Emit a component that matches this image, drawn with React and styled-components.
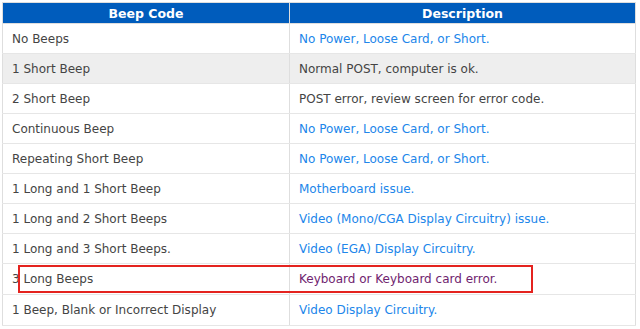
import React from "react";
import styled, { createGlobalStyle } from "styled-components";

const Global = createGlobalStyle`
  html, body { margin: 0; padding: 0; background: #fff; }
  body { font-family: "DejaVu Sans", Verdana, sans-serif; }
`;

const Page = styled.div`
  padding: 2px 0 0 2px;
  width: 634px;
`;

const Wrap = styled.div`
  position: relative;
`;

const Table = styled.table`
  border-collapse: collapse;
  width: 634px;
  table-layout: fixed;
  border: 1px solid #dedede;
`;

const Head = styled.th`
  background: #005cbc;
  color: #fff;
  font-weight: bold;
  font-size: 12.5px;
  height: 20px;
  padding: 0;
  text-align: center;
  border-right: 1px solid #dedede;
  border-bottom: 1px solid #dedede;
`;

const Row = styled.tr`
  background: ${(p) => (p.$shade ? "#eeeeee" : "#ffffff")};
`;

const Cell = styled.td`
  height: ${(p) => (p.$tall ? 30 : 29)}px;
  padding: 0 0 0 9px;
  font-size: 12px;
  color: ${(p) => p.$color || "#444"};
  border-right: 1px solid #dedede;
  border-bottom: 1px solid #e6e6e6;
  white-space: nowrap;
`;

const Highlight = styled.div`
  position: absolute;
  left: 16px;
  top: 263px;
  width: 511px;
  height: 24px;
  border: 2px solid #e4231f;
  pointer-events: none;
`;

const BLUE = "#2186ea";
const PURPLE = "#70246f";
const DARK = "#444";

const rows = [
  { code: "No Beeps", desc: "No Power, Loose Card, or Short.", color: BLUE },
  { code: "1 Short Beep", desc: "Normal POST, computer is ok.", color: DARK, shade: true },
  { code: "2 Short Beep", desc: "POST error, review screen for error code.", color: DARK },
  { code: "Continuous Beep", desc: "No Power, Loose Card, or Short.", color: BLUE },
  { code: "Repeating Short Beep", desc: "No Power, Loose Card, or Short.", color: BLUE },
  { code: "1 Long and 1 Short Beep", desc: "Motherboard issue.", color: BLUE },
  { code: "1 Long and 2 Short Beeps", desc: "Video (Mono/CGA Display Circuitry) issue.", color: BLUE },
  { code: "1 Long and 3 Short Beeps.", desc: "Video (EGA) Display Circuitry.", color: BLUE },
  { code: "3 Long Beeps", desc: "Keyboard or Keyboard card error.", color: PURPLE, tall: true },
  { code: "1 Beep, Blank or Incorrect Display", desc: "Video Display Circuitry.", color: BLUE, tall: true },
];

export default function App() {
  return (
    <Page>
      <Global />
      <Wrap>
        <Table>
          <colgroup>
            <col style={{ width: "287px" }} />
            <col />
          </colgroup>
          <thead>
            <tr>
              <Head>Beep Code</Head>
              <Head>Description</Head>
            </tr>
          </thead>
          <tbody>
            {rows.map((r) => (
              <Row key={r.code} $shade={r.shade}>
                <Cell $tall={r.tall}>{r.code}</Cell>
                <Cell $tall={r.tall} $color={r.color}>{r.desc}</Cell>
              </Row>
            ))}
          </tbody>
        </Table>
        <Highlight />
      </Wrap>
    </Page>
  );
}
